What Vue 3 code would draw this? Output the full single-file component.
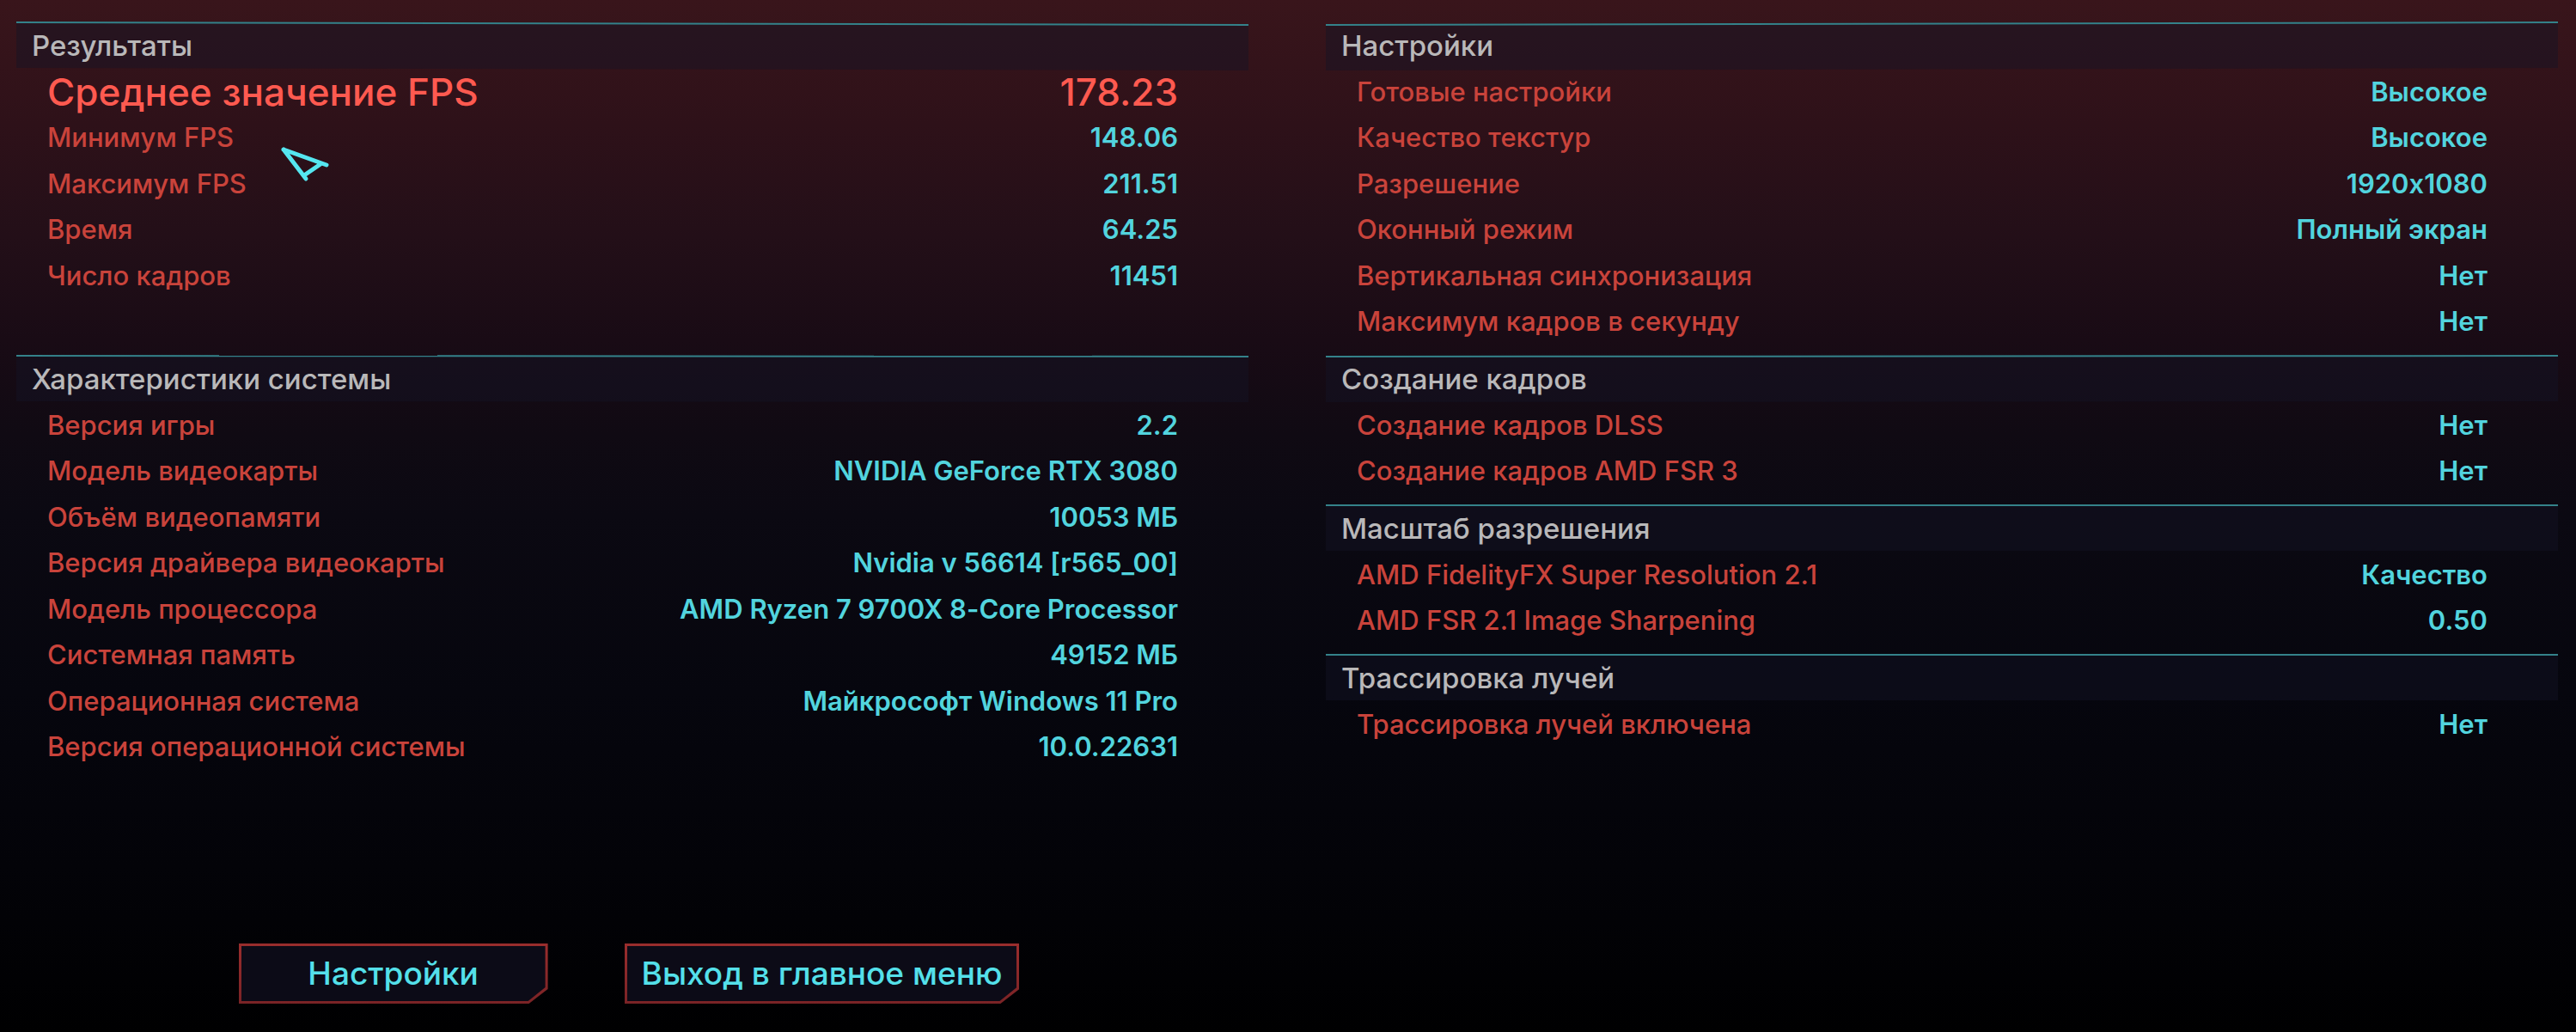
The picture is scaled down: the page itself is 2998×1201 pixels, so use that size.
<script setup>
const leftSections = [
  {
    title: 'Результаты',
    variant: 'results',
    rows: [
      { label: 'Среднее значение FPS', value: '178.23', main: true },
      { label: 'Минимум FPS', value: '148.06' },
      { label: 'Максимум FPS', value: '211.51' },
      { label: 'Время', value: '64.25' },
      { label: 'Число кадров', value: '11451' },
    ],
  },
  {
    title: 'Характеристики системы',
    variant: 'lean-down',
    rows: [
      { label: 'Версия игры', value: '2.2' },
      { label: 'Модель видеокарты', value: 'NVIDIA GeForce RTX 3080' },
      { label: 'Объём видеопамяти', value: '10053 МБ' },
      { label: 'Версия драйвера видеокарты', value: 'Nvidia v 56614 [r565_00]' },
      { label: 'Модель процессора', value: 'AMD Ryzen 7 9700X 8-Core Processor' },
      { label: 'Системная память', value: '49152 МБ' },
      { label: 'Операционная система', value: 'Майкрософт Windows 11 Pro' },
      { label: 'Версия операционной системы', value: '10.0.22631' },
    ],
  },
]

const rightSections = [
  {
    title: 'Настройки',
    variant: 'rise',
    rows: [
      { label: 'Готовые настройки', value: 'Высокое' },
      { label: 'Качество текстур', value: 'Высокое' },
      { label: 'Разрешение', value: '1920x1080' },
      { label: 'Оконный режим', value: 'Полный экран' },
      { label: 'Вертикальная синхронизация', value: 'Нет' },
      { label: 'Максимум кадров в секунду', value: 'Нет' },
    ],
  },
  {
    title: 'Создание кадров',
    variant: 'lean-up',
    rows: [
      { label: 'Создание кадров DLSS', value: 'Нет' },
      { label: 'Создание кадров AMD FSR 3', value: 'Нет' },
    ],
  },
  {
    title: 'Масштаб разрешения',
    variant: 'level',
    rows: [
      { label: 'AMD FidelityFX Super Resolution 2.1', value: 'Качество' },
      { label: 'AMD FSR 2.1 Image Sharpening', value: '0.50' },
    ],
  },
  {
    title: 'Трассировка лучей',
    variant: 'level',
    rows: [{ label: 'Трассировка лучей включена', value: 'Нет' }],
  },
]

const columns = [
  { id: 'left', sections: leftSections },
  { id: 'right', sections: rightSections },
]
</script>

<template>
  <main class="screen">
    <div class="columns">
      <div v-for="column in columns" :key="column.id" class="column">
        <section v-for="section in column.sections" :key="section.title" class="section" :class="section.variant">
          <h2 class="title">{{ section.title }}</h2>
          <dl class="rows">
            <div v-for="row in section.rows" :key="row.label" class="row" :class="{ main: row.main }">
              <dt>{{ row.label }}</dt>
              <dd>{{ row.value }}</dd>
            </div>
          </dl>
        </section>
      </div>
    </div>

    <footer class="actions">
      <button type="button" class="action">Настройки</button>
      <button type="button" class="action">Выход в главное меню</button>
    </footer>

    <svg class="cursor" width="62" height="46" viewBox="0 0 62 46" aria-hidden="true">
      <path d="M5 5 L55 23 M5 5 L31 39 M48 22 L29 35" />
    </svg>
  </main>
</template>

<style>
body {
  margin: 0;
  background: #000;
}
</style>

<style scoped>
.screen {
  position: relative;
  box-sizing: border-box;
  display: flex;
  flex-direction: column;
  min-height: 100vh;
  padding: 25px 21px 33px 19px;
  font-family: Inter, "Noto Sans", sans-serif;
  font-size: 31px;
  font-feature-settings: "calt" 0;
  background: linear-gradient(
    #39151b 0%,
    #2e1119 12%,
    #230f18 23%,
    #190b15 33%,
    #100a13 42%,
    #0b0912 50%,
    #06060e 67%,
    #030308 84%,
    #000001 100%
  );
}

.columns {
  display: grid;
  grid-template-columns: 1fr 1fr;
  column-gap: 90px;
}

.section {
  --from: 0px;
  --to: 0px;
  margin-bottom: 10px;
}
.results {
  --to: 3px;
}
.rise {
  --from: 3px;
}
.lean-down {
  --to: 1px;
}
.lean-up {
  --from: 1px;
}

.title {
  position: relative;
  z-index: 0;
  box-sizing: border-box;
  height: 57px;
  margin: 0;
  padding: 0 18px;
  font-size: 33px;
  font-weight: 500;
  line-height: 57px;
  color: #b9b8b9;
}
.title::before,
.title::after {
  content: "";
  position: absolute;
  z-index: -1;
  inset: 0;
}
.title::before {
  background: rgba(20, 21, 38, 0.45);
  clip-path: polygon(
    0 var(--from),
    100% var(--to),
    100% calc(100% - 3px + var(--to)),
    0 calc(100% - 3px + var(--from))
  );
}
.title::after {
  background: #34828a;
  clip-path: polygon(
    0 var(--from),
    100% var(--to),
    100% calc(2px + var(--to)),
    0 calc(2px + var(--from))
  );
}

.rows {
  margin: 0;
  padding: 0 82px 0 36px;
}
.results .rows {
  padding-bottom: 54px;
}
.row {
  display: flex;
  justify-content: space-between;
  height: 53px;
  line-height: 50px;
}
.row:nth-child(even) {
  height: 54px;
}
dt {
  color: #c9433b;
  font-weight: 500;
}
dd {
  margin: 0;
  color: #52d4de;
  font-weight: 600;
}
.main {
  font-size: 44px;
}
.main dt,
.main dd {
  color: #ff5a50;
  font-weight: 500;
}

.actions {
  display: flex;
  justify-content: center;
  gap: 89px;
  width: calc(50% - 53px);
  margin-top: auto;
}
.action {
  position: relative;
  z-index: 0;
  box-sizing: border-box;
  min-width: 360px;
  height: 70px;
  padding: 0 20px;
  border: 0;
  background: linear-gradient(#9a2d2d, #7a2326);
  color: #54e0ea;
  font-family: inherit;
  font-size: 37px;
  font-weight: 500;
  line-height: 70px;
  white-space: nowrap;
  clip-path: polygon(0 0, 100% 0, 100% calc(100% - 17px), calc(100% - 22px) 100%, 0 100%);
}
.action::before {
  content: "";
  position: absolute;
  z-index: -1;
  inset: 3px;
  background: #0c0b17;
  clip-path: polygon(0 0, 100% 0, 100% calc(100% - 16px), calc(100% - 20px) 100%, 0 100%);
}

.cursor {
  position: absolute;
  top: 169px;
  left: 325px;
  fill: none;
  stroke: #55e6f0;
  stroke-width: 5;
  stroke-linecap: round;
}
</style>
